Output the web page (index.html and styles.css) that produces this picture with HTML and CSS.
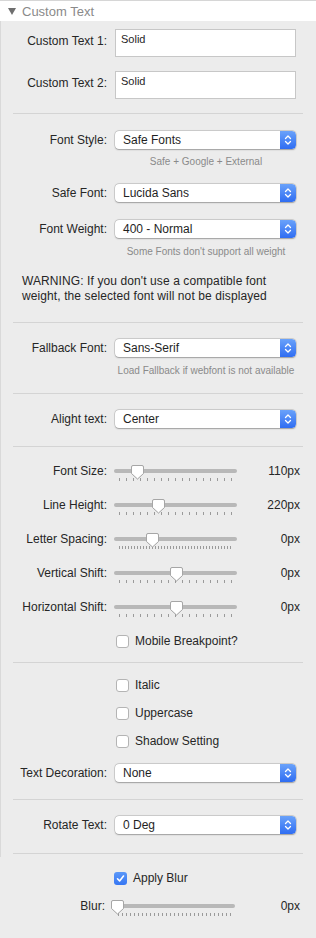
FILE: index.html
```html
<!DOCTYPE html>
<html>
<head>
<meta charset="utf-8">
<link rel="stylesheet" href="styles.css">
</head>
<body>
<div class="panel">
  <div class="header"><span class="tri"></span><span class="title">Custom Text</span></div>
  <div class="body">
    <div class="sec sec-text">
      <div class="row row-input"><div class="label">Custom Text 1:</div><div class="textbox">Solid</div></div>
      <div class="row row-input"><div class="label">Custom Text 2:</div><div class="textbox">Solid</div></div>
    </div>
    <div class="sep"></div>
    <div class="sec sec-font">
      <div class="row"><div class="label">Font Style:</div><div class="select"><span class="val">Safe Fonts</span><span class="step"><svg width="16" height="18" viewBox="0 0 16 18"><path d="M5.5 7.5 L8 5 L10.5 7.5 M5.5 10.5 L8 13 L10.5 10.5" fill="none" stroke="#fff" stroke-width="1.3" stroke-linecap="round" stroke-linejoin="round"/></svg></span></div></div>
      <div class="hint">Safe + Google + External</div>
      <div class="row r-safe"><div class="label">Safe Font:</div><div class="select"><span class="val">Lucida Sans</span><span class="step"><svg width="16" height="18" viewBox="0 0 16 18"><path d="M5.5 7.5 L8 5 L10.5 7.5 M5.5 10.5 L8 13 L10.5 10.5" fill="none" stroke="#fff" stroke-width="1.3" stroke-linecap="round" stroke-linejoin="round"/></svg></span></div></div>
      <div class="row r-weight"><div class="label">Font Weight:</div><div class="select"><span class="val">400 - Normal</span><span class="step"><svg width="16" height="18" viewBox="0 0 16 18"><path d="M5.5 7.5 L8 5 L10.5 7.5 M5.5 10.5 L8 13 L10.5 10.5" fill="none" stroke="#fff" stroke-width="1.3" stroke-linecap="round" stroke-linejoin="round"/></svg></span></div></div>
      <div class="hint hint-w">Some Fonts don't support all weight</div>
      <div class="warning">WARNING: If you don't use a compatible font weight, the selected font will not be displayed</div>
    </div>
    <div class="sep"></div>
    <div class="sec sec-fallback">
      <div class="row"><div class="label">Fallback Font:</div><div class="select"><span class="val">Sans-Serif</span><span class="step"><svg width="16" height="18" viewBox="0 0 16 18"><path d="M5.5 7.5 L8 5 L10.5 7.5 M5.5 10.5 L8 13 L10.5 10.5" fill="none" stroke="#fff" stroke-width="1.3" stroke-linecap="round" stroke-linejoin="round"/></svg></span></div></div>
      <div class="hint hint-w">Load Fallback if webfont is not available</div>
    </div>
    <div class="sep"></div>
    <div class="sec sec-align">
      <div class="row"><div class="label">Alight text:</div><div class="select"><span class="val">Center</span><span class="step"><svg width="16" height="18" viewBox="0 0 16 18"><path d="M5.5 7.5 L8 5 L10.5 7.5 M5.5 10.5 L8 13 L10.5 10.5" fill="none" stroke="#fff" stroke-width="1.3" stroke-linecap="round" stroke-linejoin="round"/></svg></span></div></div>
    </div>
    <div class="sep"></div>
    <div class="sec sec-sliders">
      <div class="srow"><div class="label">Font Size:</div><div class="slider"><div class="track"></div><div class="ticks"></div><svg class="thumb" style="left:17px" width="13" height="15" viewBox="0 0 13 15"><path d="M2 0.5 H11 Q12.5 0.5 12.5 2 V8.5 L6.5 14 L0.5 8.5 V2 Q0.5 0.5 2 0.5 Z" fill="#fff" stroke="#a6a6a6"/></svg></div><div class="value">110px</div></div>
      <div class="srow"><div class="label">Line Height:</div><div class="slider"><div class="track"></div><div class="ticks"></div><svg class="thumb" style="left:38px" width="13" height="15" viewBox="0 0 13 15"><path d="M2 0.5 H11 Q12.5 0.5 12.5 2 V8.5 L6.5 14 L0.5 8.5 V2 Q0.5 0.5 2 0.5 Z" fill="#fff" stroke="#a6a6a6"/></svg></div><div class="value">220px</div></div>
      <div class="srow"><div class="label">Letter Spacing:</div><div class="slider"><div class="track"></div><div class="ticks dense"></div><svg class="thumb" style="left:32px" width="13" height="15" viewBox="0 0 13 15"><path d="M2 0.5 H11 Q12.5 0.5 12.5 2 V8.5 L6.5 14 L0.5 8.5 V2 Q0.5 0.5 2 0.5 Z" fill="#fff" stroke="#a6a6a6"/></svg></div><div class="value">0px</div></div>
      <div class="srow"><div class="label">Vertical Shift:</div><div class="slider"><div class="track"></div><div class="ticks"></div><svg class="thumb" style="left:56px" width="13" height="15" viewBox="0 0 13 15"><path d="M2 0.5 H11 Q12.5 0.5 12.5 2 V8.5 L6.5 14 L0.5 8.5 V2 Q0.5 0.5 2 0.5 Z" fill="#fff" stroke="#a6a6a6"/></svg></div><div class="value">0px</div></div>
      <div class="srow"><div class="label">Horizontal Shift:</div><div class="slider"><div class="track"></div><div class="ticks"></div><svg class="thumb" style="left:56px" width="13" height="15" viewBox="0 0 13 15"><path d="M2 0.5 H11 Q12.5 0.5 12.5 2 V8.5 L6.5 14 L0.5 8.5 V2 Q0.5 0.5 2 0.5 Z" fill="#fff" stroke="#a6a6a6"/></svg></div><div class="value">0px</div></div>
      <div class="crow c-mobile"><span class="box"></span><span>Mobile Breakpoint?</span></div>
    </div>
    <div class="sep"></div>
    <div class="sec sec-style">
      <div class="crow"><span class="box"></span><span>Italic</span></div>
      <div class="crow c-next"><span class="box"></span><span>Uppercase</span></div>
      <div class="crow c-next"><span class="box"></span><span>Shadow Setting</span></div>
      <div class="row r-deco"><div class="label">Text Decoration:</div><div class="select"><span class="val">None</span><span class="step"><svg width="16" height="18" viewBox="0 0 16 18"><path d="M5.5 7.5 L8 5 L10.5 7.5 M5.5 10.5 L8 13 L10.5 10.5" fill="none" stroke="#fff" stroke-width="1.3" stroke-linecap="round" stroke-linejoin="round"/></svg></span></div></div>
    </div>
    <div class="sep"></div>
    <div class="sec sec-rotate">
      <div class="row"><div class="label">Rotate Text:</div><div class="select"><span class="val">0 Deg</span><span class="step"><svg width="16" height="18" viewBox="0 0 16 18"><path d="M5.5 7.5 L8 5 L10.5 7.5 M5.5 10.5 L8 13 L10.5 10.5" fill="none" stroke="#fff" stroke-width="1.3" stroke-linecap="round" stroke-linejoin="round"/></svg></span></div></div>
    </div>
    <div class="sep"></div>
  </div>
  <div class="sec sec-blur">
    <div class="crow c-blur"><span class="box checked"><svg width="13" height="13" viewBox="0 0 13 13"><path d="M3.5 6.8 L5.6 9 L9.5 4" fill="none" stroke="#fff" stroke-width="1.6" stroke-linecap="round" stroke-linejoin="round"/></svg></span><span>Apply Blur</span></div>
    <div class="srow blur-row"><div class="label">Blur:</div><div class="slider"><div class="track"></div><div class="ticks blur"></div><svg class="thumb" style="left:-1px" width="13" height="15" viewBox="0 0 13 15"><path d="M2 0.5 H11 Q12.5 0.5 12.5 2 V8.5 L6.5 14 L0.5 8.5 V2 Q0.5 0.5 2 0.5 Z" fill="#fff" stroke="#a6a6a6"/></svg></div><div class="value">0px</div></div>
  </div>
</div>
</body>
</html>
```
FILE: styles.css
```css
* { box-sizing: border-box; }
html, body { margin: 0; padding: 0; }
body {
  width: 316px;
  height: 938px;
  background: #ececec;
  font-family: "Liberation Sans", Arial, sans-serif;
  font-size: 12px;
  color: #262626;
  overflow: hidden;
}
.panel { width: 316px; }
.header {
  height: 21px;
  background: #fff;
  border-top: 1px solid #d6d6d6;
  display: flex;
  align-items: center;
  padding-left: 8px;
}
.tri {
  width: 0; height: 0;
  border-left: 4px solid transparent;
  border-right: 4px solid transparent;
  border-top: 7px solid #6e6e6e;
  margin-right: 6px;
}
.title { font-size: 13px; color: #8a8a8a; }
.body { border-left: 1px solid #d9d9d9; padding-bottom: 3px; }
.sep { height: 1px; background: #d4d4d4; margin: 0 13px 0 12px; }

.row { display: flex; align-items: center; height: 18px; }
.label { width: 106px; text-align: right; flex: none; white-space: nowrap; }
.row .label { margin-right: 8px; }

.sec-text { padding: 8px 0 14px; }
.row-input { height: 28px; align-items: flex-start; }
.row-input + .row-input { margin-top: 14px; }
.row-input .label { padding-top: 5px; }
.textbox {
  width: 181px; height: 28px;
  background: #fff;
  border: 1px solid #c7c7c7;
  font-size: 11px;
  padding: 3px 0 0 5px;
  line-height: 12px;
}

.select {
  width: 181px; height: 18px;
  background: #fff;
  border-radius: 4px;
  box-shadow: 0 0 0 0.5px rgba(0,0,0,0.2), 0 0.5px 1.5px rgba(0,0,0,0.25);
  display: flex;
  align-items: center;
  justify-content: space-between;
  overflow: hidden;
}
.val { padding-left: 8px; font-size: 12px; color: #1f1f1f; }
.step {
  width: 16px; height: 18px;
  background: linear-gradient(#6aa2fa, #2f6df2);
  border-radius: 0 4px 4px 0;
  display: flex;
}

.hint {
  font-size: 10px;
  color: #8a8a8a;
  text-align: center;
  margin-left: 114px;
  width: 182px;
  line-height: 12px;
  margin-top: 7px;
  white-space: nowrap;
}
.hint-w { margin-top: 8px; }
.sec-font { padding: 17px 0 18px; }
.r-safe { margin-top: 16px; }
.r-weight { margin-top: 18px; }
.warning {
  margin: 16px 0 0 21px;
  width: 275px;
  line-height: 15px;
  font-size: 12px;
  letter-spacing: 0.1px;
}
.sec-fallback { padding: 16px 0 16px; }
.sec-align { padding: 16px 0 18px; }

.sec-sliders { padding: 14px 0 13px; }
.srow { display: flex; align-items: center; height: 20px; }
.srow + .srow { margin-top: 14px; }
.srow .label { margin-right: 7px; }
.slider { position: relative; width: 123px; height: 20px; flex: none; }
.track {
  position: absolute; left: 0; right: 0; top: 8px;
  height: 4px; border-radius: 2px; background: #b8b8b8;
}
.ticks {
  position: absolute; left: 5px; top: 17px;
  width: 113px; height: 3px;
  background: repeating-linear-gradient(to right, #9a9a9a 0 1px, transparent 1px 7px);
}
.ticks.dense { background: repeating-linear-gradient(to right, #9a9a9a 0 1px, transparent 1px 3px); }
.ticks.blur { left: 6px; background: repeating-linear-gradient(to right, #9a9a9a 0 1px, transparent 1px 4px); }
.thumb { position: absolute; top: 4px; filter: drop-shadow(0 0.5px 0.5px rgba(0,0,0,0.15)); }
.value { flex: 1; text-align: right; padding-right: 16px; }

.crow { display: flex; align-items: center; height: 16px; padding-left: 115px; }
.c-mobile { margin-top: 16px; }
.box {
  width: 13px; height: 13px;
  border: 1px solid #b4b4b4;
  border-radius: 3px;
  background: #fff;
  margin-right: 6px;
  flex: none;
}
.box.checked {
  border: none;
  background: linear-gradient(#5b98f8, #3676f3);
  display: flex;
}
.sec-style { padding: 14px 0 17px; }
.c-next { margin-top: 12px; }
.r-deco { margin-top: 15px; }
.sec-rotate { padding: 16px 0 19px; }

.sec-blur { padding: 13px 0 0; }
.c-blur { padding-left: 114px; }
.blur-row { margin-top: 10px; }
.blur-row .label { width: 105px; margin-right: 7px; }
```
